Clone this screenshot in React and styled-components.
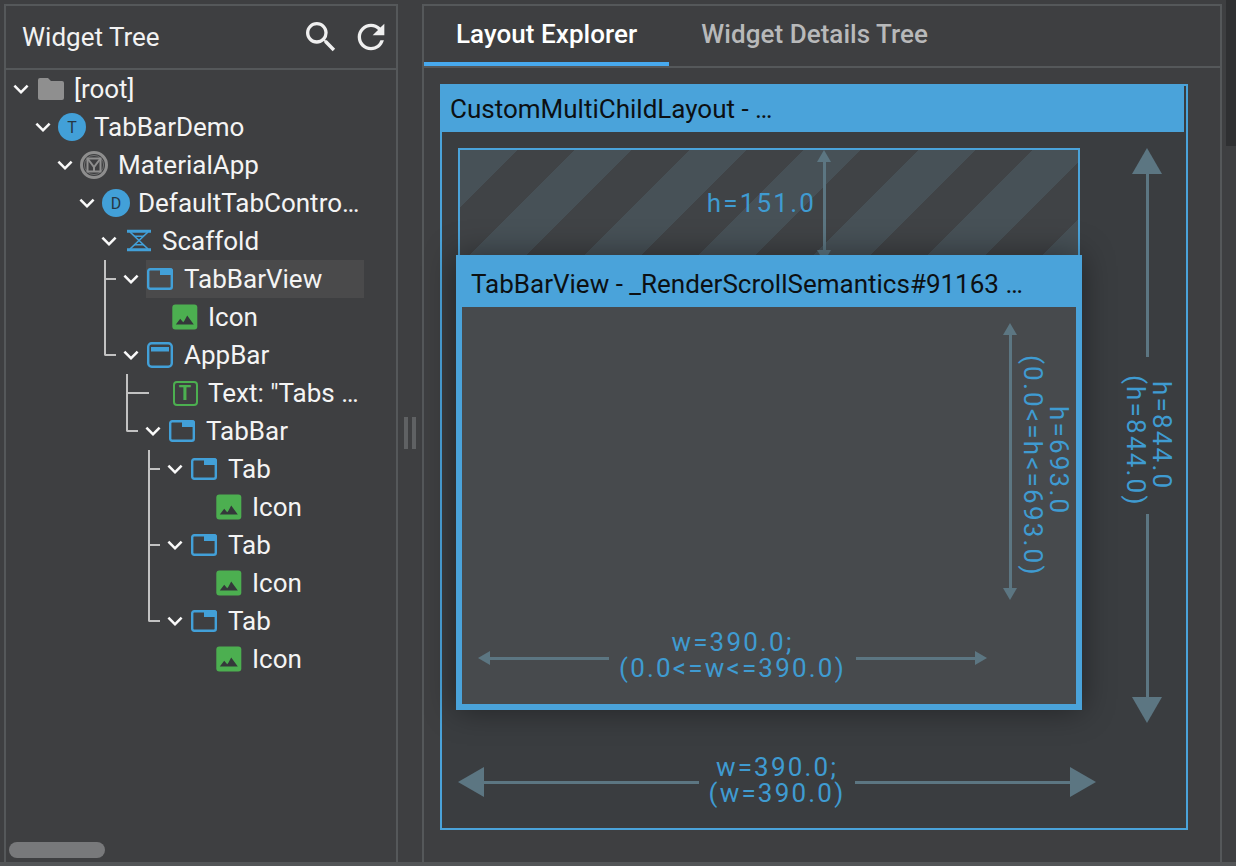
import styled, { createGlobalStyle } from "styled-components";
import { MdSearch, MdRefresh, MdExpandMore } from "react-icons/md";

const BLUE = "#4aa3da";
const ICON_BLUE = "#42a0d8";
const GREEN = "#4caf50";
const ARROW = "#5c7682";
const LABEL = "#3f9bd1";

const treeRows = [
  { level: 0, name: "[root]", icon: "folder", open: true },
  { level: 1, name: "TabBarDemo", icon: "T", open: true },
  { level: 2, name: "MaterialApp", icon: "material", open: true },
  { level: 3, name: "DefaultTabContro…", icon: "D", open: true },
  { level: 4, name: "Scaffold", icon: "scaffold", open: true },
  { level: 5, name: "TabBarView", icon: "tab", open: true, selected: true, elbow: { x: 98, rise: 19, reach: 12 } },
  { level: 6, name: "Icon", icon: "image" },
  { level: 5, name: "AppBar", icon: "appbar", open: true, elbow: { x: 98, rise: 76, reach: 12 } },
  { level: 6, name: 'Text: "Tabs …', icon: "text", elbow: { x: 120, rise: 19, reach: 23 } },
  { level: 6, name: "TabBar", icon: "tab", open: true, elbow: { x: 120, rise: 38, reach: 12 } },
  { level: 7, name: "Tab", icon: "tab", open: true, elbow: { x: 142, rise: 19, reach: 12 } },
  { level: 8, name: "Icon", icon: "image" },
  { level: 7, name: "Tab", icon: "tab", open: true, elbow: { x: 142, rise: 76, reach: 12 } },
  { level: 8, name: "Icon", icon: "image" },
  { level: 7, name: "Tab", icon: "tab", open: true, elbow: { x: 142, rise: 76, reach: 12 } },
  { level: 8, name: "Icon", icon: "image" },
];

const headPoints = {
  up: "15,0 30,26 0,26",
  down: "0,0 30,0 15,26",
  left: "0,15 26,0 26,30",
  right: "0,0 26,15 0,30",
};

const ArrowHead = ({ dir, big }) => {
  const across = big ? 30 : 14;
  const along = big ? 26 : 12;
  const upright = dir === "up" || dir === "down";
  return (
    <svg
      width={upright ? across : along}
      height={upright ? along : across}
      viewBox={upright ? "0 0 30 26" : "0 0 26 30"}
      preserveAspectRatio="none"
      style={{ flexShrink: 0, display: "block" }}
    >
      <polygon points={headPoints[dir]} fill={ARROW} />
    </svg>
  );
};

const TreeIcon = ({ type }) => {
  if (type === "T" || type === "D") return <LetterBadge>{type}</LetterBadge>;
  if (type === "text") return <TextBadge>T</TextBadge>;
  if (type === "folder")
    return (
      <svg width="28" height="24" viewBox="0 0 28 24">
        <path d="M4 1h8l3 3h11a2 2 0 0 1 2 2v15a2 2 0 0 1-2 2H4a2 2 0 0 1-2-2V3a2 2 0 0 1 2-2z" fill="#8f8f8f" />
      </svg>
    );
  if (type === "material")
    return (
      <svg width="28" height="28" viewBox="0 0 28 28" fill="none" stroke="#8e8e8e">
        <circle cx="14" cy="14" r="12.5" strokeWidth="3" />
        <circle cx="14" cy="14" r="9.6" strokeWidth="1" opacity="0.6" />
        <rect x="7.5" y="7.5" width="13" height="13" strokeWidth="2" />
        <path d="M7.5 7.5l6.5 8.5 6.5-8.5M14 16v4.5" strokeWidth="2" />
      </svg>
    );
  if (type === "scaffold")
    return (
      <svg width="28" height="26" viewBox="0 0 28 26" fill="none" stroke={ICON_BLUE}>
        <path d="M3 3.2h24M3 21.8h24" strokeWidth="3" />
        <path d="M10 8.2h10M10 16.8h10" strokeWidth="1.4" />
        <path d="M6 4l18 17M24 4L6 21" strokeWidth="1.7" />
      </svg>
    );
  if (type === "tab")
    return (
      <svg width="28" height="24" viewBox="0 0 28 24" fill="none">
        <rect x="2.2" y="2.2" width="23.6" height="19.6" rx="2" stroke={ICON_BLUE} strokeWidth="2.4" />
        <path d="M14 1h10a3 3 0 0 1 3 3v4H14z" fill={ICON_BLUE} />
      </svg>
    );
  if (type === "appbar")
    return (
      <svg width="28" height="26" viewBox="0 0 28 26" fill="none">
        <rect x="2.2" y="1.2" width="23.6" height="23.6" rx="3.5" stroke={ICON_BLUE} strokeWidth="2.4" />
        <rect x="5" y="5" width="18" height="4.5" fill={ICON_BLUE} />
      </svg>
    );
  return (
    <svg width="28" height="26" viewBox="0 0 28 26">
      <rect x="2.3" y="0.5" width="25" height="25" rx="3" fill={GREEN} />
      <path d="M5.8 20.5l4.4-5.8 3 3.6 1.2-1.5 2.8-5.3 6.6 9z" fill="#34383a" />
    </svg>
  );
};

const App = () => {
  return (
    <>
      <GlobalStyle />
      <Page>
        <Workspace>
          <TreePanel>
            <TreeHeader>
              <HeaderTitle>Widget Tree</HeaderTitle>
              <HeaderTools>
                <MdSearch size={40} />
                <MdRefresh size={40} />
              </HeaderTools>
            </TreeHeader>
            <TreeList>
              {treeRows.map((row, index) => (
                <TreeRow key={index} $level={row.level}>
                  {row.elbow && <Elbow $x={row.elbow.x} $rise={row.elbow.rise} $reach={row.elbow.reach} />}
                  <ChevronSlot $leaf={!row.open}>{row.open && <MdExpandMore size={30} />}</ChevronSlot>
                  <RowLabel $selected={row.selected} $compact={row.icon === "T" || row.icon === "D"}>
                    <IconSlot>
                      <TreeIcon type={row.icon} />
                    </IconSlot>
                    <RowName>{row.name}</RowName>
                  </RowLabel>
                </TreeRow>
              ))}
            </TreeList>
            <TreeScrollbar />
          </TreePanel>
          <Splitter>
            <Grip />
            <Grip />
          </Splitter>
          <DetailsPanel>
            <TabStrip>
              <TabButton $active>Layout Explorer</TabButton>
              <TabButton>Widget Details Tree</TabButton>
            </TabStrip>
            <Explorer>
              <OuterBox>
                <OuterTitle>CustomMultiChildLayout - …</OuterTitle>
                <OuterBody>
                  <Children>
                    <Striped>
                      <DimLabel $tight>h=151.0</DimLabel>
                      <VerticalArrow>
                        <ArrowHead dir="up" />
                        <Shaft $vertical />
                        <ArrowHead dir="down" />
                      </VerticalArrow>
                    </Striped>
                    <ChildBox>
                      <ChildTitle>TabBarView - _RenderScrollSemantics#91163 …</ChildTitle>
                      <ChildBody>
                        <ChildHeightRow>
                          <VerticalArrow>
                            <ArrowHead dir="up" />
                            <Shaft $vertical />
                            <ArrowHead dir="down" />
                          </VerticalArrow>
                          <DimLabel $vertical $inner>
                            <FirstLine>h=693.0</FirstLine>
                            <br />
                            (0.0&lt;=h&lt;=693.0)
                          </DimLabel>
                        </ChildHeightRow>
                        <ChildWidthRow>
                          <ArrowHead dir="left" />
                          <Shaft />
                          <DimLabel $pad $lift={6}>
                            w=390.0;
                            <br />
                            (0.0&lt;=w&lt;=390.0)
                          </DimLabel>
                          <Shaft />
                          <ArrowHead dir="right" />
                        </ChildWidthRow>
                      </ChildBody>
                    </ChildBox>
                  </Children>
                  <OuterHeight>
                    <ArrowHead dir="up" big />
                    <Shaft $vertical />
                    <DimLabel $vertical $pad>
                      <FirstLine>h=844.0</FirstLine>
                      <br />
                      (h=844.0)
                    </DimLabel>
                    <Shaft $vertical />
                    <ArrowHead dir="down" big />
                  </OuterHeight>
                  <OuterWidth>
                    <ArrowHead dir="left" big />
                    <Shaft />
                    <DimLabel $pad $lift={4}>
                      w=390.0;
                      <br />
                      (w=390.0)
                    </DimLabel>
                    <Shaft />
                    <ArrowHead dir="right" big />
                  </OuterWidth>
                </OuterBody>
              </OuterBox>
            </Explorer>
          </DetailsPanel>
          <PageScroll>
            <PageThumb />
          </PageScroll>
        </Workspace>
        <BottomEdge />
      </Page>
    </>
  );
};

const GlobalStyle = createGlobalStyle`
  html, body {
    margin: 0;
    padding: 0;
    background: #3e3f41;
  }
  body {
    font-family: Roboto, "Liberation Sans", sans-serif;
    overflow: hidden;
  }
`;

const Page = styled.div`
  width: 1236px;
  height: 866px;
  display: flex;
  flex-direction: column;
  overflow: hidden;
  background: #3e3f41;
`;

const Workspace = styled.div`
  flex: 1;
  min-height: 0;
  display: flex;
  padding: 4px 0 0 4px;
`;

const BottomEdge = styled.div`
  height: 4px;
  background: #535557;
`;

const TreePanel = styled.section`
  width: 394px;
  flex-shrink: 0;
  box-sizing: border-box;
  border: 2px solid #55585a;
  border-bottom: 0;
  display: flex;
  flex-direction: column;
  position: relative;
`;

const TreeHeader = styled.header`
  height: 64px;
  box-sizing: border-box;
  border-bottom: 2px solid #55585a;
  padding: 0 5px 0 16px;
  display: flex;
  align-items: center;
  justify-content: space-between;
`;

const HeaderTitle = styled.h2`
  margin: 0;
  font-size: 26px;
  font-weight: 400;
  color: #f2f2f2;
`;

const HeaderTools = styled.div`
  display: flex;
  align-items: center;
  gap: 10px;
  color: #efefef;
`;

const TreeList = styled.div`
  display: flex;
  flex-direction: column;
`;

const TreeRow = styled.div`
  position: relative;
  width: 358px;
  height: 38px;
  box-sizing: border-box;
  padding-left: ${(p) => 4 + p.$level * 22}px;
  display: flex;
  align-items: stretch;
`;

const Elbow = styled.span`
  position: absolute;
  left: ${(p) => p.$x}px;
  bottom: calc(50% - 1px);
  width: ${(p) => p.$reach}px;
  height: ${(p) => p.$rise + 1}px;
  box-sizing: border-box;
  border-left: 2px solid #c2c2c2;
  border-bottom: 2px solid #c2c2c2;
  border-bottom-left-radius: 2px;
`;

const ChevronSlot = styled.span`
  width: 22px;
  margin-right: ${(p) => (p.$leaf ? 6 : 4)}px;
  flex-shrink: 0;
  display: flex;
  align-items: center;
  justify-content: center;
  color: #fafafa;
  svg {
    flex-shrink: 0;
  }
`;

const RowLabel = styled.div`
  flex: 1;
  min-width: 0;
  display: flex;
  align-items: center;
  gap: ${(p) => (p.$compact ? 8 : 10)}px;
  background: ${(p) => (p.$selected ? "#4a4a4b" : "transparent")};
`;

const IconSlot = styled.span`
  width: 28px;
  height: 28px;
  flex-shrink: 0;
  display: flex;
  align-items: center;
  justify-content: center;
  svg {
    display: block;
  }
`;

const RowName = styled.span`
  font-size: 26px;
  color: #f4f4f4;
  white-space: nowrap;
`;

const LetterBadge = styled.span`
  width: 28px;
  height: 28px;
  border-radius: 50%;
  background: ${ICON_BLUE};
  color: #263744;
  font-size: 16px;
  display: flex;
  align-items: center;
  justify-content: center;
`;

const TextBadge = styled.span`
  width: 25px;
  height: 25px;
  margin-left: 2px;
  flex-shrink: 0;
  box-sizing: border-box;
  border: 2.5px solid ${GREEN};
  border-radius: 4px;
  color: ${GREEN};
  font-size: 20px;
  font-weight: 700;
  line-height: 1;
  display: flex;
  align-items: center;
  justify-content: center;
`;

const TreeScrollbar = styled.div`
  position: absolute;
  left: 3px;
  bottom: 4px;
  width: 96px;
  height: 16px;
  border-radius: 8px;
  background: #78797b;
`;

const Splitter = styled.div`
  width: 24px;
  flex-shrink: 0;
  display: flex;
  align-items: center;
  justify-content: center;
  gap: 4px;
`;

const Grip = styled.span`
  width: 4px;
  height: 32px;
  background: #5f6163;
`;

const DetailsPanel = styled.section`
  width: 800px;
  flex-shrink: 0;
  box-sizing: border-box;
  border: 2px solid #55585a;
  border-bottom: 0;
  display: flex;
  flex-direction: column;
`;

const TabStrip = styled.nav`
  height: 62px;
  flex-shrink: 0;
  box-sizing: border-box;
  border-bottom: 2px solid #55585a;
  display: flex;
`;

const TabButton = styled.div`
  padding: 0 32px;
  display: flex;
  align-items: center;
  font-size: 26px;
  font-weight: 500;
  letter-spacing: 0.05px;
  color: ${(p) => (p.$active ? "#ffffff" : "#b8b9ba")};
  border-bottom: 4px solid ${(p) => (p.$active ? "#47a9ee" : "transparent")};
  box-sizing: border-box;
`;

const Explorer = styled.div`
  flex: 1;
  min-height: 0;
  padding: 16px 0 0 16px;
`;

const OuterBox = styled.div`
  width: 748px;
  height: 746px;
  box-sizing: border-box;
  border: 2px solid ${BLUE};
  background: #3a3d40;
  display: flex;
  flex-direction: column;
`;

const OuterTitle = styled.div`
  height: 46px;
  flex-shrink: 0;
  margin-right: 2px;
  padding-left: 8px;
  background: ${BLUE};
  color: #0c1013;
  font-size: 26px;
  display: flex;
  align-items: center;
`;

const OuterBody = styled.div`
  flex: 1;
  padding: 16px 0 0 16px;
  display: grid;
  grid-template-columns: 638px 1fr;
  grid-template-rows: 575px auto;
`;

const Children = styled.div`
  display: flex;
  flex-direction: column;
  align-items: flex-start;
`;

const Striped = styled.div`
  width: 622px;
  height: 116px;
  flex-shrink: 0;
  box-sizing: border-box;
  border: 2px solid ${BLUE};
  padding-right: 247px;
  display: flex;
  justify-content: flex-end;
  align-items: center;
  gap: 1px;
  background: repeating-linear-gradient(
    135deg,
    #475157 0,
    #475157 40.5px,
    #404346 40.5px,
    #404346 81px
  );
`;

const ChildBox = styled.div`
  position: relative;
  width: 626px;
  height: 455px;
  flex-shrink: 0;
  margin: -9px 0 0 -2px;
  box-sizing: border-box;
  border: 6px solid ${BLUE};
  border-top: 0;
  background: #474a4d;
  box-shadow: 0 0 30px rgba(0, 0, 0, 0.42);
  display: flex;
  flex-direction: column;
`;

const ChildTitle = styled.div`
  height: 52px;
  flex-shrink: 0;
  margin: 0 -6px;
  box-sizing: border-box;
  padding: 6px 0 0 15px;
  background: ${BLUE};
  color: #0c1013;
  font-size: 26px;
  white-space: nowrap;
  display: flex;
  align-items: center;
`;

const ChildBody = styled.div`
  flex: 1;
  padding: 16px 0 0 16px;
  display: flex;
  flex-direction: column;
`;

const ChildHeightRow = styled.div`
  height: 277px;
  padding-right: 4px;
  display: flex;
  justify-content: flex-end;
  align-items: center;
  gap: 3px;
`;

const ChildWidthRow = styled.div`
  width: 509px;
  margin-top: 29px;
  display: flex;
  align-items: center;
`;

const VerticalArrow = styled.div`
  align-self: stretch;
  width: 14px;
  flex-shrink: 0;
  display: flex;
  flex-direction: column;
  align-items: center;
`;

const Shaft = styled.span`
  flex: 1;
  background: ${ARROW};
  ${(p) => (p.$vertical ? "width: 3px;" : "height: 3px;")}
`;

const DimLabel = styled.div`
  font-size: 26px;
  line-height: 26px;
  letter-spacing: 2.2px;
  color: ${LABEL};
  text-align: center;
  white-space: nowrap;
  flex-shrink: 0;
  ${(p) => p.$vertical && "writing-mode: vertical-rl;"}
  ${(p) => p.$pad && (p.$vertical ? "padding: 18px 0 8px; margin-left: 4px;" : "padding: 0 10px;")}
  ${(p) => p.$inner && "padding-top: 8px;"}
  ${(p) => p.$tight && "margin-bottom: 6px;"}
  ${(p) => p.$lift && `margin-bottom: ${p.$lift}px;`}
`;

const FirstLine = styled.span`
  padding-inline-end: 9px;
`;

const OuterHeight = styled.div`
  margin-left: 36px;
  width: 30px;
  display: flex;
  flex-direction: column;
  align-items: center;
`;

const OuterWidth = styled.div`
  grid-column: 1;
  margin-top: 33px;
  display: flex;
  align-items: center;
  height: 52px;
`;

const PageScroll = styled.div`
  width: 10px;
  margin: -4px 0 0 4px;
  flex-shrink: 0;
`;

const PageThumb = styled.div`
  height: 146px;
  background: #2f3032;
`;

export default App;
